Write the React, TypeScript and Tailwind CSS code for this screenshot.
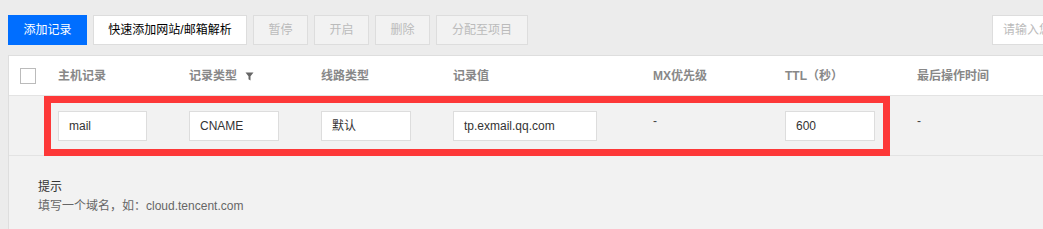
import React from 'react';

const font = {
  fontFamily: '"Liberation Sans", Arial, "Noto Sans CJK SC", sans-serif',
};

const columns = [
  { key: 'host', label: '主机记录' },
  { key: 'type', label: '记录类型', filter: true },
  { key: 'line', label: '线路类型' },
  { key: 'value', label: '记录值' },
  { key: 'mx', label: 'MX优先级' },
  { key: 'ttl', label: 'TTL（秒）' },
  { key: 'time', label: '最后操作时间' },
];

function FilterIcon() {
  return (
    <svg width="9" height="9" viewBox="0 0 9 9" className="ml-[8px] mt-[1px]">
      <path d="M0.5 0.5h8L5.5 4.2V8.5L3.5 7.3V4.2Z" fill="#666" />
    </svg>
  );
}

function CellInput({ value, width }: { value: string; width: string }) {
  return (
    <div
      className={`h-[30px] ${width} border border-[#dddddd] bg-white pl-[10px] text-[12px] leading-[28px] text-[#333]`}
    >
      {value}
    </div>
  );
}

export default function App() {
  const disabledBtn =
    'h-[30px] w-[55px] border border-[#dddddd] bg-[#f2f2f2] text-[12px] text-[#bbbbbb]';

  return (
    <div
      className="flex h-[229px] w-[1043px] flex-col overflow-hidden bg-[#ececec]"
      style={font}
    >
      {/* toolbar */}
      <div className="flex h-[55px] shrink-0 items-start pt-[15px] pl-[8px]">
        <div className="flex gap-[6px]">
          <button className="h-[30px] w-[79px] bg-[#006eff] text-[12px] text-white">
            添加记录
          </button>
          <button className="h-[30px] w-[154px] border border-[#dddddd] bg-white text-[12px] text-black">
            快速添加网站/邮箱解析
          </button>
          <button className={disabledBtn}>暂停</button>
          <button className={disabledBtn}>开启</button>
          <button className={disabledBtn}>删除</button>
          <button className="h-[30px] w-[92px] border border-[#dddddd] bg-[#f2f2f2] text-[12px] text-[#bbbbbb]">
            分配至项目
          </button>
        </div>
        <div className="ml-auto mr-[-149px] h-[30px] w-[200px] shrink-0 border border-[#dddddd] bg-white pl-[10px] text-[12px] leading-[28px] text-[#bbbbbb]">
          请输入您要搜索的记录
        </div>
      </div>

      {/* table panel */}
      <div className="relative ml-[8px] flex-1 border-t border-l border-[#dedede] bg-[#f2f2f2]">
        <div className="grid h-[40px] grid-cols-[37px_131px_132px_132px_200px_132px_132px_1fr] items-center border-b border-[#e3e3e3] bg-white">
          <div className="pl-[11px]">
            <div className="h-[16px] w-[16px] border border-[#bbbbbb] bg-white" />
          </div>
          {columns.map((c) => (
            <div
              key={c.key}
              className="flex items-center pl-[12px] text-[12px] font-bold whitespace-nowrap text-[#888888]"
            >
              {c.label}
              {c.filter && <FilterIcon />}
            </div>
          ))}
        </div>

        <div className="grid h-[60px] grid-cols-[37px_131px_132px_132px_200px_132px_132px_1fr] items-start border-b border-[#e3e3e3] pt-[15px]">
          <div />
          <div className="pl-[12px]">
            <CellInput value="mail" width="w-[89px]" />
          </div>
          <div className="pl-[12px]">
            <CellInput value="CNAME" width="w-[90px]" />
          </div>
          <div className="pl-[12px]">
            <CellInput value="默认" width="w-[90px]" />
          </div>
          <div className="pl-[12px]">
            <CellInput value="tp.exmail.qq.com" width="w-[144px]" />
          </div>
          <div className="pl-[12px] text-[12px] leading-[20px] text-[#444]">-</div>
          <div className="pl-[12px]">
            <CellInput value="600" width="w-[90px]" />
          </div>
          <div className="pl-[12px] text-[12px] leading-[20px] text-[#444]">-</div>
        </div>

        <div className="pt-[22px] pl-[29px] text-[12px] leading-[19px]">
          <div className="text-[#333]">提示</div>
          <div className="text-[#666]">填写一个域名，如：cloud.tencent.com</div>
        </div>

        {/* annotation */}
        <div className="pointer-events-none absolute top-[40px] left-[35px] h-[60px] w-[846px] border-[7px] border-[#fd3838]" />
      </div>
    </div>
  );
}
